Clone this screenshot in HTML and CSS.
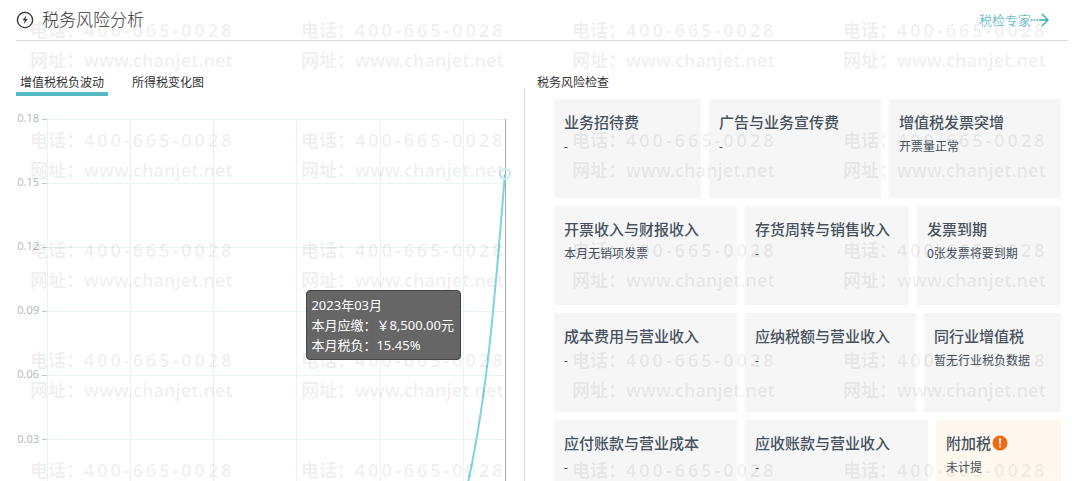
FILE: index.html
```html
<!DOCTYPE html>
<html lang="zh-CN">
  <head>
    <meta charset="UTF-8" />
    <meta name="viewport" content="width=device-width, initial-scale=1.0" />
    <title>税务风险分析</title>
    <link rel="stylesheet" href="styles.css">
  </head>
  <body>
    <header class="header">
      <svg class="header-icon" viewBox="0 0 18 18" aria-hidden="true">
        <circle cx="9" cy="9" r="7.6" fill="none" stroke="#333" stroke-width="1.4" />
        <path d="M10.4 4.6 6.4 9.3h2.3L7.8 13l4-4.9H9.4z" fill="#333" />
      </svg>
      <h1>税务风险分析</h1>
      <a class="expert-link" href="#">税检专家<svg viewBox="0 0 18 14" aria-hidden="true">
          <path d="M0 7h8" stroke-dasharray="1.5 1.2" />
          <path d="M8 7h9M11 1l6 6-6 6" />
        </svg></a>
    </header>

    <main class="content">
      <section class="trend">
        <div class="tabs">
          <button type="button" class="tab active">增值税税负波动</button>
          <button type="button" class="tab">所得税变化图</button>
        </div>

        <div class="chart">
          <svg class="chart-svg" viewBox="0 0 508 420" role="img" aria-label="增值税税负波动">
            <g class="grid-lines">
              <path d="M31 15.5h458M31 79.5h458M31 143.5h458M31 207.5h458M31 271.5h458M31 335.5h458M31 399.5h458" />
              <path d="M31.5 15v385M114.5 15v385M197.5 15v385M280.5 15v385M364.5 15v385M447.5 15v385" />
            </g>
            <path class="ticks" d="M26 15.5h5M26 79.5h5M26 143.5h5M26 207.5h5M26 271.5h5M26 335.5h5M26 399.5h5" />
            <g class="axis-labels">
              <text x="23" y="18">0.18</text>
              <text x="23" y="82">0.15</text>
              <text x="23" y="146">0.12</text>
              <text x="23" y="210">0.09</text>
              <text x="23" y="274">0.06</text>
              <text x="23" y="339">0.03</text>
              <text x="23" y="403">0</text>
            </g>
            <path class="pointer" d="M489.5 15v385" />
            <path class="line" d="M489 70C480 176 472 300 447 400" />
            <circle class="point" cx="489" cy="70" r="5" />
          </svg>

          <div class="tooltip">
            <div>2023年03月</div>
            <div>本月应缴：￥8,500.00元</div>
            <div>本月税负：15.45%</div>
          </div>
        </div>
      </section>

      <section class="checks">
        <h2>税务风险检查</h2>

        <div class="cards">
          <div class="card-row row-1">
            <div class="card">
              <h3>业务招待费</h3>
              <p>-</p>
            </div>
            <div class="card">
              <h3>广告与业务宣传费</h3>
              <p>-</p>
            </div>
            <div class="card">
              <h3>增值税发票突增</h3>
              <p>开票量正常</p>
            </div>
          </div>

          <div class="card-row row-2">
            <div class="card">
              <h3>开票收入与财报收入</h3>
              <p>本月无销项发票</p>
            </div>
            <div class="card">
              <h3>存货周转与销售收入</h3>
              <p>-</p>
            </div>
            <div class="card">
              <h3>发票到期</h3>
              <p>0张发票将要到期</p>
            </div>
          </div>

          <div class="card-row row-3">
            <div class="card">
              <h3>成本费用与营业收入</h3>
              <p>-</p>
            </div>
            <div class="card">
              <h3>应纳税额与营业收入</h3>
              <p>-</p>
            </div>
            <div class="card">
              <h3>同行业增值税</h3>
              <p>暂无行业税负数据</p>
            </div>
          </div>

          <div class="card-row row-4">
            <div class="card">
              <h3>应付账款与营业成本</h3>
              <p>-</p>
            </div>
            <div class="card">
              <h3>应收账款与营业收入</h3>
              <p>-</p>
            </div>
            <div class="card warning">
              <h3>附加税<svg class="warning-icon" viewBox="0 0 16 16" aria-hidden="true">
                  <circle cx="8" cy="8" r="7.5" fill="#ed6a14" />
                  <path d="M7 3.5h2L8.7 9.5H7.3z" fill="#fff" />
                  <circle cx="8" cy="11.6" r="1" fill="#fff" />
                </svg></h3>
              <p>未计提</p>
            </div>
          </div>
        </div>
      </section>
    </main>

    <div class="watermark" id="watermark"></div>

    <script>
      // repeat the contact watermark over the whole page
      const watermark = document.getElementById("watermark");

      for (let i = 0; i < 20; i++) {
        const mark = document.createElement("div");
        mark.innerHTML =
          '<div>电话：<span class="phone">400-665-0028</span></div><div>网址：www.chanjet.net</div>';
        watermark.appendChild(mark);
      }
    </script>
  </body>
</html>
```
FILE: styles.css
```css
* {
  box-sizing: border-box;
}

body {
  position: relative;
  height: 100vh;
  margin: 0;
  font-family: "Noto Sans", "Noto Sans CJK SC", sans-serif;
  font-size: 12px;
  color: #333;
  background: #fff;
  overflow: hidden;
}

h1,
h2,
h3,
p {
  margin: 0;
}

.header {
  display: flex;
  align-items: center;
  height: 41px;
  margin: 0 4px 0 16px;
  padding-right: 19px;
  border-bottom: 1px solid #d9d9d9;
}

.header-icon {
  width: 18px;
  height: 18px;
  margin-right: 8px;
}

h1 {
  font-size: 17px;
  font-weight: 300;
  line-height: 24px;
}

.expert-link {
  display: flex;
  align-items: center;
  margin-left: auto;
  font-size: 13px;
  font-weight: 300;
  line-height: 20px;
  color: #35aabd;
  text-decoration: none;
}

.expert-link svg {
  width: 18px;
  height: 14px;
  fill: none;
  stroke: #35aabd;
  stroke-width: 1.3;
}

.content {
  display: grid;
  grid-template-columns: 508fr 548fr;
  padding: 32px 0 0 16px;
}

.tabs {
  display: flex;
  gap: 20px;
}

.tab {
  height: 23px;
  padding: 0 4px;
  border: none;
  border-bottom: 4px solid transparent;
  background: none;
  font-family: inherit;
  font-size: 12px;
  line-height: 18px;
  color: #333;
  cursor: pointer;
}

.tab.active {
  border-bottom-color: #56b9c6;
}

.chart {
  position: relative;
  margin-top: 8px;
}

.chart-svg {
  display: block;
  width: 100%;
}

.grid-lines {
  fill: none;
  stroke: #e8f3f3;
}

.ticks {
  stroke: #c3c8cc;
}

.axis-labels {
  font-size: 11px;
  fill: #b4babf;
  text-anchor: end;
}

.pointer {
  stroke: #aaa;
}

.line {
  fill: none;
  stroke: #7fd3de;
  stroke-width: 2;
}

.point {
  fill: none;
  stroke: #c5eaef;
  stroke-width: 2;
}

.tooltip {
  position: absolute;
  top: 186px;
  right: 63px;
  z-index: 2;
  padding: 4px 6px 4px 4px;
  border: 1px solid #444;
  border-radius: 4px;
  background: #666;
  color: #fff;
  font-size: 13px;
  line-height: 20px;
  white-space: nowrap;
}

.checks {
  position: relative;
  padding: 0 11px 0 13px;
}

/* divider between the chart and the checks */
.checks::before {
  content: "";
  position: absolute;
  top: 15px;
  bottom: 0;
  left: 0;
  width: 1px;
  background: #ddd;
}

h2 {
  font-size: 12px;
  font-weight: 400;
  line-height: 20px;
}

.cards {
  display: grid;
  gap: 8px;
  margin-top: 6px;
  padding-left: 17px;
}

.card-row {
  display: grid;
  gap: 8px;
}

.row-1 {
  grid-template-columns: 147fr 172fr 172fr;
}

.row-2 {
  grid-template-columns: 183fr 164fr 144fr;
}

.row-3 {
  grid-template-columns: 183fr 171fr 137fr;
}

.row-4 {
  grid-template-columns: 183fr 183fr 125fr;
}

.card {
  height: 99px;
  padding: 12px 10px;
  background: #f6f6f6;
  color: #46525e;
  white-space: nowrap;
}

.card h3 {
  display: flex;
  align-items: center;
  font-size: 15px;
  font-weight: 500;
  line-height: 22px;
}

.card p {
  line-height: 28px;
}

.card.warning {
  background: #fff8ef;
}

.warning-icon {
  width: 16px;
  height: 16px;
  margin-left: 1px;
}

.watermark {
  position: absolute;
  top: 15px;
  left: 30px;
  display: grid;
  grid-template-columns: repeat(4, 271px);
  grid-auto-rows: 110px;
  font-size: 18px;
  font-weight: 600;
  line-height: 30px;
  color: rgba(0, 0, 0, 0.07);
  white-space: nowrap;
  pointer-events: none;
}

.phone {
  letter-spacing: 3px;
}
```
